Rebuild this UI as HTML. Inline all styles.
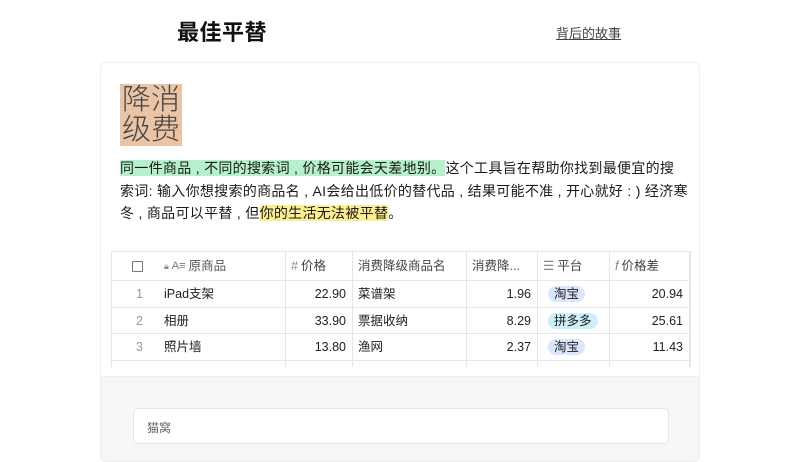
<!DOCTYPE html>
<html><head><meta charset="utf-8"><style>
*{margin:0;padding:0;box-sizing:border-box}
body{width:800px;height:450px;overflow:hidden;background:#fff;font-family:"Liberation Sans","Noto Sans CJK SC",sans-serif;color:#1f1f1f;position:relative}
.abs{position:absolute}
.title{left:177px;top:15px;font-size:22px;font-weight:bold;color:#111;letter-spacing:0.5px}
.link{left:556px;top:23px;font-size:13px;color:#444;text-decoration:underline}
.card{left:100px;top:62px;width:600px;height:400px;border:1px solid #eceef0;border-radius:6px;background:#fff;overflow:hidden}
.badge{left:19px;top:21px;width:62px;height:62px;background:#eac4a5;font-size:29px;line-height:30px;font-weight:300;color:#444;padding-left:2px;padding-top:1px}
.para{left:19px;top:94px;width:580px;font-size:14px;line-height:22.5px;color:#1a1a1a;white-space:nowrap;letter-spacing:0.3px}
.g{background:#b7f0cc}.y{background:#fbef8f}
.tbl{left:10px;top:188px;width:580px;height:116px;border:1px solid #e3e5e8;border-bottom:none;overflow:hidden}
.row{position:absolute;left:0;width:580px;border-bottom:1px solid #e6e8eb;font-size:12.5px;line-height:14px}
.c{position:absolute;top:0;height:100%;display:flex;align-items:center;padding:0 6px;white-space:nowrap}
.vl{position:absolute;top:0;width:1px;height:116px;background:#e3e5e8}
.num{justify-content:flex-end}
.tag{background:#d9e6fb;border-radius:9px;padding:1px 6px;font-size:12.5px}
.tag2{background:#cdeffa}
.gray{left:0;top:313px;width:600px;height:100px;background:#f6f7f9;border-top:1px solid #eceef0}
.inp{left:32px;top:345px;width:536px;height:36px;background:#fff;border:1px solid #e3e5e8;border-radius:5px;font-size:12px;color:#666;padding:10px 0 0 13px}
.hd{color:#444}
</style></head><body>
<div class="abs title">最佳平替</div>
<div class="abs link">背后的故事</div>
<div class="abs card">
  <div class="abs badge">降消<br>级费</div>
  <div class="abs para"><span class="g">同一件商品 , 不同的搜索词 , 价格可能会天差地别。</span>这个工具旨在帮助你找到最便宜的搜<br>索词: 输入你想搜索的商品名 , AI会给出低价的替代品 , 结果可能不准 , 开心就好 : ) 经济寒<br>冬 , 商品可以平替 , 但<span class="y">你的生活无法被平替</span>。</div>
  <div class="abs tbl">
    <div class="vl" style="left:173px"></div><div class="vl" style="left:240px"></div><div class="vl" style="left:354px"></div><div class="vl" style="left:425px"></div><div class="vl" style="left:497px"></div><div class="vl" style="left:577px"></div>
    <div class="row hd" style="top:0;height:29px">
      <div class="c" style="left:14px"><span style="display:inline-block;width:11px;height:11px;border:1px solid #777;border-radius:1px"></span></div>
      <div class="c" style="left:46px;color:#555"><span style="font-size:9px;color:#888">🔒︎</span><span style="font-size:11px;color:#777;margin:0 3px">A≡</span>原商品</div>
      <div class="c" style="left:173px"><span style="color:#888;margin-right:3px">#</span>价格</div>
      <div class="c" style="left:240px">消费降级商品名</div>
      <div class="c" style="left:354px">消费降...</div>
      <div class="c" style="left:425px"><span style="color:#888;margin-right:3px">☰</span>平台</div>
      <div class="c" style="left:497px"><span style="color:#888;margin-right:3px;font-style:italic">f</span>价格差</div>
    </div>
    <div class="row" style="top:29px;height:27px">
      <div class="c" style="left:18px;color:#999">1</div><div class="c" style="left:46px">iPad支架</div>
      <div class="c num" style="left:173px;width:67px">22.90</div><div class="c" style="left:240px">菜谱架</div>
      <div class="c num" style="left:354px;width:71px">1.96</div><div class="c" style="left:430px"><span class="tag">淘宝</span></div>
      <div class="c num" style="left:497px;width:80px">20.94</div>
    </div>
    <div class="row" style="top:56px;height:26px">
      <div class="c" style="left:18px;color:#999">2</div><div class="c" style="left:46px">相册</div>
      <div class="c num" style="left:173px;width:67px">33.90</div><div class="c" style="left:240px">票据收纳</div>
      <div class="c num" style="left:354px;width:71px">8.29</div><div class="c" style="left:430px"><span class="tag tag2">拼多多</span></div>
      <div class="c num" style="left:497px;width:80px">25.61</div>
    </div>
    <div class="row" style="top:82px;height:27px">
      <div class="c" style="left:18px;color:#999">3</div><div class="c" style="left:46px">照片墙</div>
      <div class="c num" style="left:173px;width:67px">13.80</div><div class="c" style="left:240px">渔网</div>
      <div class="c num" style="left:354px;width:71px">2.37</div><div class="c" style="left:430px"><span class="tag">淘宝</span></div>
      <div class="c num" style="left:497px;width:80px">11.43</div>
    </div>
  </div>
  <div class="abs gray"></div>
  <div class="abs inp">猫窝</div>
</div>
</body></html>
